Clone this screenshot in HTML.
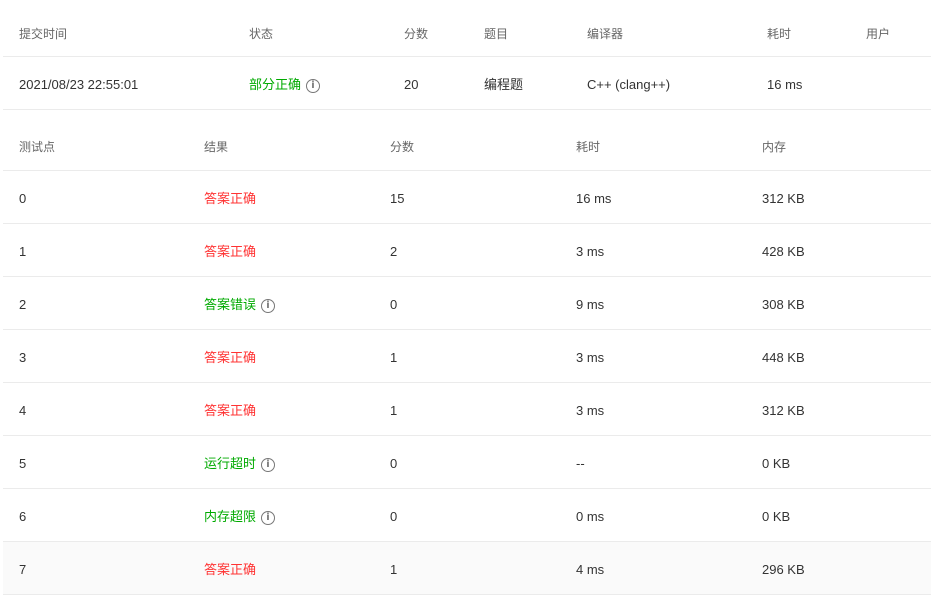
<!DOCTYPE html>
<html><head><meta charset="utf-8"><style>
body{margin:0;width:941px;height:595px;background:#fff;font-family:"Liberation Sans","Noto Sans CJK SC",sans-serif;font-size:13px;color:#333;position:relative;overflow:hidden}
.r{position:absolute;left:3px;width:928px;border-bottom:1px solid #ebebeb}
.r span{position:absolute;top:2px;white-space:nowrap;line-height:52px;height:52px}
.h span{color:#666;font-size:12px;line-height:48px}
.h2 span{line-height:50px}
.g{color:#0a0}.d{color:#f33}
.i{display:inline-block;box-sizing:border-box;width:14px;height:14px;border:1.3px solid #777;border-radius:50%;font-size:10px;line-height:11px;text-align:center;color:#777;margin-left:5px;vertical-align:1px;font-weight:bold;font-style:normal;font-family:"DejaVu Sans",sans-serif}
</style></head><body>
<div class="r h" style="top:8px;height:48px"><span style="left:16px">提交时间</span><span style="left:246px">状态</span><span style="left:401px">分数</span><span style="left:481px">题目</span><span style="left:584px">编译器</span><span style="left:764px">耗时</span><span style="left:863px">用户</span></div>
<div class="r" style="top:57px;height:52px"><span style="left:16px">2021/08/23 22:55:01</span><span style="left:246px" class="g">部分正确<i class="i">i</i></span><span style="left:401px">20</span><span style="left:481px">编程题</span><span style="left:584px">C++ (clang++)</span><span style="left:764px">16 ms</span></div>
<div class="r h h2" style="top:120px;height:50px"><span style="left:16px">测试点</span><span style="left:201px">结果</span><span style="left:387px">分数</span><span style="left:573px">耗时</span><span style="left:759px">内存</span></div>
<div class="r" style="top:171px;height:52px"><span style="left:16px">0</span><span style="left:201px" class="d">答案正确</span><span style="left:387px">15</span><span style="left:573px">16 ms</span><span style="left:759px">312 KB</span></div>
<div class="r" style="top:224px;height:52px"><span style="left:16px">1</span><span style="left:201px" class="d">答案正确</span><span style="left:387px">2</span><span style="left:573px">3 ms</span><span style="left:759px">428 KB</span></div>
<div class="r" style="top:277px;height:52px"><span style="left:16px">2</span><span style="left:201px" class="g">答案错误<i class="i">i</i></span><span style="left:387px">0</span><span style="left:573px">9 ms</span><span style="left:759px">308 KB</span></div>
<div class="r" style="top:330px;height:52px"><span style="left:16px">3</span><span style="left:201px" class="d">答案正确</span><span style="left:387px">1</span><span style="left:573px">3 ms</span><span style="left:759px">448 KB</span></div>
<div class="r" style="top:383px;height:52px"><span style="left:16px">4</span><span style="left:201px" class="d">答案正确</span><span style="left:387px">1</span><span style="left:573px">3 ms</span><span style="left:759px">312 KB</span></div>
<div class="r" style="top:436px;height:52px"><span style="left:16px">5</span><span style="left:201px" class="g">运行超时<i class="i">i</i></span><span style="left:387px">0</span><span style="left:573px">--</span><span style="left:759px">0 KB</span></div>
<div class="r" style="top:489px;height:52px"><span style="left:16px">6</span><span style="left:201px" class="g">内存超限<i class="i">i</i></span><span style="left:387px">0</span><span style="left:573px">0 ms</span><span style="left:759px">0 KB</span></div>
<div class="r" style="top:542px;height:52px;background:#fafafa"><span style="left:16px">7</span><span style="left:201px" class="d">答案正确</span><span style="left:387px">1</span><span style="left:573px">4 ms</span><span style="left:759px">296 KB</span></div>
</body></html>
